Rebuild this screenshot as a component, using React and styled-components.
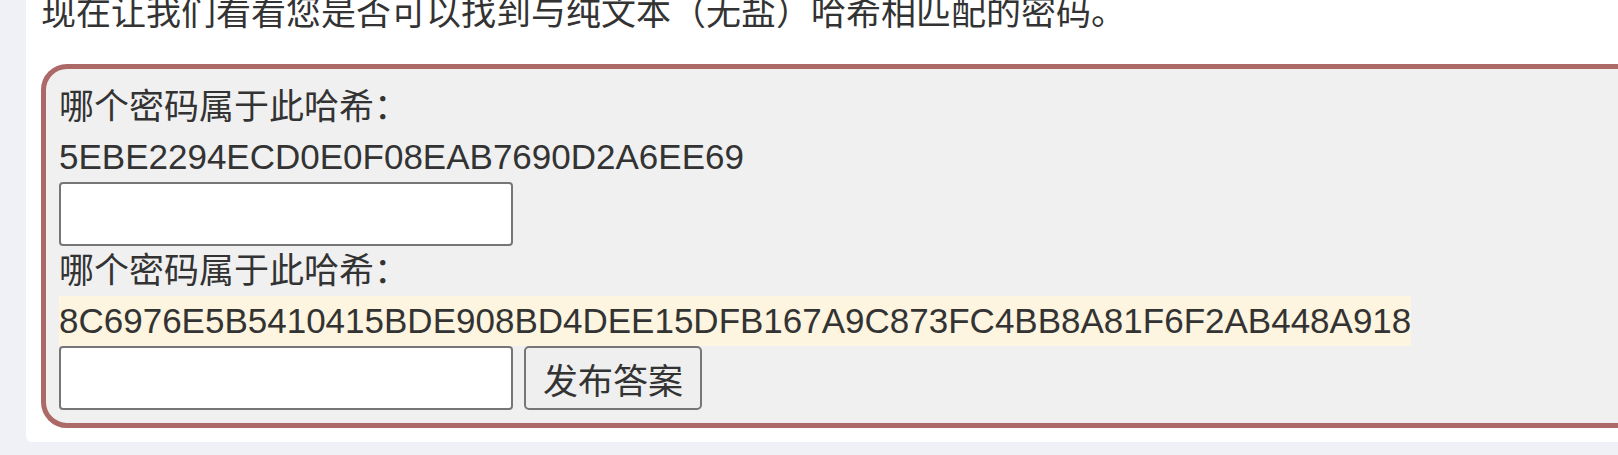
import React, { useState } from 'react'
import styled, { createGlobalStyle } from 'styled-components'

const GlobalStyle = createGlobalStyle`
  html, body {
    margin: 0;
    padding: 0;
    background: #f0f1f6;
    overflow: hidden;
  }
  body {
    font-family: "Liberation Sans", Arial, "Noto Sans CJK SC", sans-serif;
    color: #333;
  }
`

const Card = styled.div`
  margin: -12px 0 0 26px;
  width: 1700px;
  padding: 0 15px 14px;
  background: #fff;
  border-radius: 0 0 6px 6px;
`

const Intro = styled.p`
  margin: 0 0 26px;
  font-size: 35px;
  line-height: 50px;
  white-space: nowrap;
`

const Quiz = styled.div`
  border: 5px solid #ad6868;
  border-radius: 26px;
  background: #f0f0f0;
  padding: 13px;
  font-size: 35px;
  line-height: 50px;
`

const Question = styled.div`
  white-space: nowrap;
`

const Hash = styled.div`
  width: fit-content;
  white-space: nowrap;
  background: ${p => (p.$marked ? '#fdf5df' : 'transparent')};
`

const Answer = styled.input`
  display: block;
  box-sizing: border-box;
  width: 454px;
  height: 64px;
  margin: 0;
  padding: 2px 6px;
  border: 2px solid #767676;
  border-radius: 4px;
  background: #fff;
  font: 35px "Liberation Sans", Arial, sans-serif;
  color: #333;
  outline: none;
`

const Row = styled.div`
  display: flex;
  align-items: center;
  gap: 11px;
`

const Submit = styled.button`
  box-sizing: border-box;
  height: 64px;
  padding: 0 17px;
  border: 2px solid #767676;
  border-radius: 5px;
  background: #efefef;
  color: #333;
  font: 35px "Liberation Sans", Arial, "Noto Sans CJK SC", sans-serif;
  cursor: pointer;
`

const hashes = [
  '5EBE2294ECD0E0F08EAB7690D2A6EE69',
  '8C6976E5B5410415BDE908BD4DEE15DFB167A9C873FC4BB8A81F6F2AB448A918',
]

const App = () => {
  const [answers, setAnswers] = useState(['', ''])

  const handleChange = (i, value) => {
    setAnswers(prev => prev.map((a, j) => (j === i ? value : a)))
  }

  return (
    <>
      <GlobalStyle />
      <Card>
        <Intro>现在让我们看看您是否可以找到与纯文本（无盐）哈希相匹配的密码。</Intro>
        <Quiz>
          <Question>哪个密码属于此哈希：</Question>
          <Hash>{hashes[0]}</Hash>
          <Answer value={answers[0]} onChange={e => handleChange(0, e.target.value)} />
          <Question>哪个密码属于此哈希：</Question>
          <Hash $marked>{hashes[1]}</Hash>
          <Row>
            <Answer value={answers[1]} onChange={e => handleChange(1, e.target.value)} />
            <Submit>发布答案</Submit>
          </Row>
        </Quiz>
      </Card>
    </>
  )
}

export default App
